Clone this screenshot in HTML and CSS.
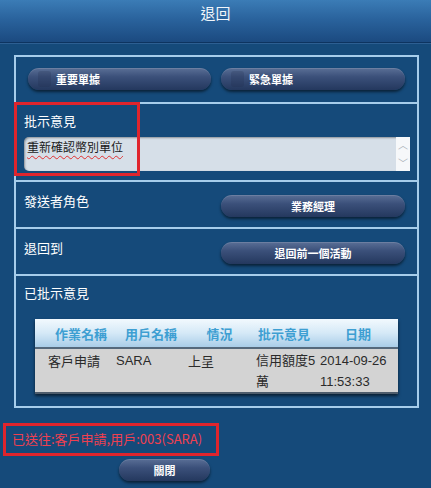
FILE: index.html
```html
<!DOCTYPE html>
<html lang="zh-Hant">
<head>
<meta charset="utf-8">
<title>退回</title>
<link rel="stylesheet" href="styles.css">
</head>
<body>
<header class="topbar"><h1 class="title">退回</h1></header>
<main class="main">
  <section class="panel">
    <div class="row row-buttons">
      <button class="btn btn-icon"><span class="btn-mark"></span>重要單據</button>
      <button class="btn btn-icon"><span class="btn-mark"></span>緊急單據</button>
    </div>
    <div class="row row-comment">
      <div class="label">批示意見</div>
      <div class="textbox">
        <span class="textbox-text">重新確認幣別單位</span>
        <span class="scroll"><span class="chev">︿</span><span class="chev">﹀</span></span>
      </div>
    </div>
    <div class="row row-split">
      <div class="label">發送者角色</div>
      <button class="btn">業務經理</button>
    </div>
    <div class="row row-split">
      <div class="label">退回到</div>
      <button class="btn">退回前一個活動</button>
    </div>
    <div class="row row-history">
      <div class="label">已批示意見</div>
      <table class="grid">
        <colgroup><col class="c1"><col class="c2"><col class="c3"><col class="c4"><col class="c5"></colgroup>
        <thead><tr><th>作業名稱</th><th>用戶名稱</th><th>情況</th><th>批示意見</th><th>日期</th></tr></thead>
        <tbody><tr><td class="p1">客戶申請</td><td class="p2">SARA</td><td class="p3">上呈</td><td class="p4">信用額度5萬</td><td class="p5">2014-09-26 11:53:33</td></tr></tbody>
      </table>
    </div>
    <div class="mark-box"></div>
  </section>
  <div class="message">已送往:客戶申請,用戶:003(SARA)</div>
  <button class="btn btn-close">關閉</button>
</main>
</body>
</html>
```
FILE: styles.css
```css
* { box-sizing: border-box; }
html, body { margin: 0; padding: 0; }
body {
  width: 431px;
  height: 488px;
  overflow: hidden;
  background: #154a7a;
  font-family: "Noto Sans CJK TC", "Liberation Sans", sans-serif;
  color: #fff;
}
.topbar {
  height: 43px;
  background: linear-gradient(#3b7cb6 0%, #2a639d 45%, #1b4a80 100%);
  border-bottom: 1px solid #0d3460;
  box-shadow: 0 1px 0 #2d5f92;
}
.title {
  margin: 0;
  padding-top: 3px;
  text-align: center;
  font-size: 15px;
  font-weight: normal;
  line-height: 20px;
  color: #f2f6fb;
}
.main {
  padding: 12px 12px 0 14px;
}
.panel {
  position: relative;
  border: 2px solid #a6cdeb;
}
.row {
  border-top: 2px solid #a6cdeb;
}
.row:first-child { border-top: 0; }
.label {
  font-size: 13px;
  line-height: 16px;
  color: #fff;
}
.btn {
  display: flex;
  align-items: center;
  justify-content: center;
  height: 22px;
  border: 0;
  border-radius: 11px;
  background: linear-gradient(#5a6f96 0%, #3b507a 40%, #24385e 100%);
  box-shadow: 0 2px 3px rgba(0,0,0,0.55), inset 0 1px 0 rgba(255,255,255,0.12);
  color: #fff;
  font-family: "Noto Sans CJK TC", sans-serif;
  font-weight: bold;
  font-size: 11px;
  padding: 0;
}
.row-buttons {
  height: 45px;
  display: grid;
  grid-template-columns: 183px 184px;
  column-gap: 10px;
  padding: 11px 0 0 12px;
}
.btn-icon { justify-content: flex-start; padding-left: 10px; }
.btn-mark {
  width: 13px;
  height: 16px;
  margin-right: 5px;
  border-radius: 3px;
  background: rgba(30, 40, 70, 0.2);
}
.row-comment {
  height: 78px;
  padding: 9px 7px 0 8px;
}
.textbox {
  margin-top: 8px;
  height: 34px;
  display: flex;
  background: #d6dfe8;
  border-radius: 5px 0 0 5px;
  box-shadow: inset 1px 1px 2px rgba(0,0,0,0.35);
}
.textbox-text {
  flex: 1;
  padding: 2px 0 0 3px;
  font-size: 12px;
  line-height: 16px;
  color: #1b1b1b;
  text-decoration: underline wavy #e03030;
  text-decoration-thickness: 1px;
  text-underline-offset: 3px;
  text-decoration-skip-ink: none;
}
.scroll {
  width: 14px;
  background: #f6f8fa;
  display: flex;
  flex-direction: column;
  align-items: center;
  justify-content: space-between;
  padding: 2px 0;
  color: #a8b0b8;
  font-size: 10px;
  line-height: 12px;
}
.row-split {
  height: 47px;
  display: grid;
  grid-template-columns: 1fr 184px;
  padding: 10px 12px 0 8px;
}
.row-split .label { padding-top: 1px; }
.row-split .btn { margin-top: 3px; }
.row-history {
  height: 132px;
  padding: 9px 0 0 8px;
}
.grid {
  margin: 18px 0 0 11px;
  width: 363px;
  table-layout: fixed;
  border-collapse: collapse;
  box-shadow: 0 2px 3px rgba(0,0,0,0.6);
}
.c1 { width: 70px; }
.c2 { width: 70px; }
.c3 { width: 75px; }
.c4 { width: 68px; }
.c5 { width: 80px; }
.grid th {
  height: 29px;
  background: linear-gradient(#f2f9fe 0%, #d5e9f7 50%, #a9cde8 100%);
  border-bottom: 2px solid #55697c;
  color: #3e9fd2;
  font-size: 13px;
  font-weight: bold;
  text-align: center;
  padding: 0;
  white-space: nowrap;
}
.grid th:nth-child(1) { padding-left: 20px; }
.grid th:nth-child(2) { padding-left: 20px; }
.grid th:nth-child(3) { padding-left: 14px; }
.grid th:nth-child(5) { padding-left: 0; }
.grid td {
  background: #d3d3d3;
  color: #2a2a2a;
  font-family: "Liberation Sans", "Noto Sans CJK TC", sans-serif;
  font-size: 13px;
  line-height: 21px;
  vertical-align: top;
  padding: 1px 0 0;
  height: 42px;
  border-bottom: 2px solid #4d5c6c;
}
.grid td.p1 { padding-left: 13px; font-family: "Noto Sans CJK TC", sans-serif; }
.grid td.p2 { padding-left: 11px; }
.grid td.p3 { padding-left: 13px; font-family: "Noto Sans CJK TC", sans-serif; }
.grid td.p4 { padding-left: 6px; padding-right: 0; }
.grid td.p5 { padding-left: 2px; }
.mark-box {
  position: absolute;
  left: -2px;
  top: 45px;
  width: 126px;
  height: 74px;
  border: 3px solid #e0252d;
  pointer-events: none;
}
.message {
  display: inline-block;
  margin: 15px 0 0 -11px;
  width: 216px;
  height: 33px;
  border: 3px solid #e0252d;
  color: #f04050;
  font-size: 13px;
  line-height: 26px;
  padding-left: 6px;
  white-space: nowrap;
}
.btn-close {
  margin: 3px 0 0 105px;
  width: 91px;
}
```
